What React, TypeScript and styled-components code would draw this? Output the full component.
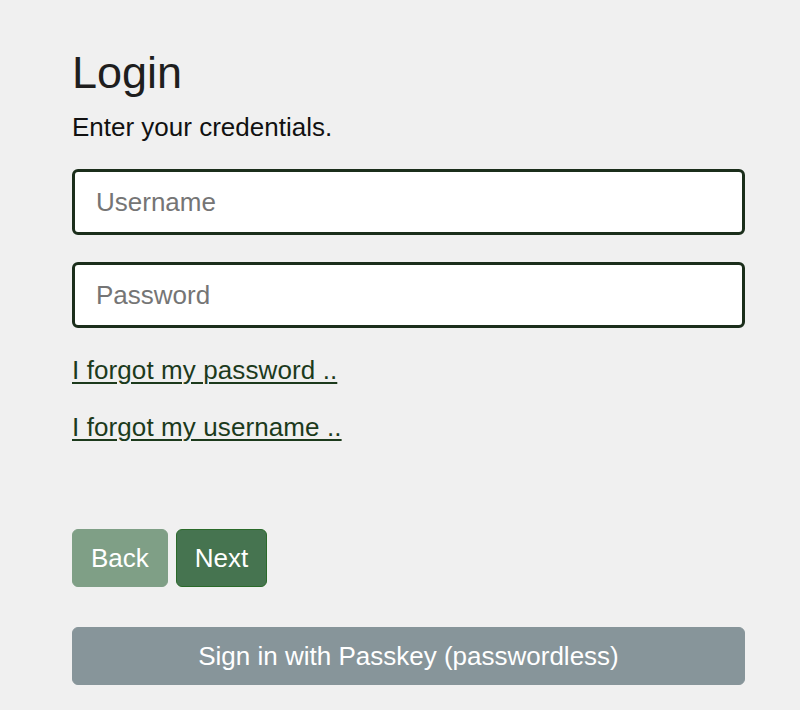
import React from "react";
import styled, { createGlobalStyle } from "styled-components";

const GlobalStyle = createGlobalStyle`
  html, body {
    margin: 0;
    padding: 0;
    background: #f0f0f0;
  }
  body {
    font-family: "Liberation Sans", Arial, sans-serif;
    color: #222;
  }
  * { box-sizing: border-box; }
`;

const Page = styled.main`
  width: 800px;
  min-height: 710px;
  padding: 47px 55px 0 72px;
  display: flex;
  flex-direction: column;
`;

const Title = styled.h1`
  margin: 0;
  font-size: 45px;
  line-height: 52px;
  font-weight: 400;
  color: #1e1e1e;
`;

const Subtitle = styled.p`
  margin: 13px 0 0;
  font-size: 26px;
  line-height: 30px;
  color: #111;
`;

const Form = styled.form`
  display: flex;
  flex-direction: column;
  margin-top: 27px;
  gap: 27px;
`;

const Field = styled.input`
  width: 673px;
  height: 66px;
  padding: 0 21px;
  border: 3px solid #1b2e1b;
  border-radius: 6px;
  background: #fff;
  font-family: "Liberation Sans", Arial, sans-serif;
  font-size: 26px;
  color: #222;
  outline: none;
  &::placeholder {
    color: #757575;
  }
`;

const Links = styled.div`
  display: flex;
  flex-direction: column;
  align-items: flex-start;
  gap: 27px;
  margin-top: 27px;
`;

const TextLink = styled.a`
  font-size: 26px;
  line-height: 30px;
  letter-spacing: 0.1px;
  color: #1c3a1c;
  text-decoration: underline;
  text-underline-offset: 3px;
  text-decoration-thickness: 2px;
`;

const ButtonRow = styled.div`
  display: flex;
  gap: 8px;
  margin-top: 87px;
`;

const Button = styled.button<{ $variant: "back" | "next" | "passkey" }>`
  height: 58px;
  padding: 0 18px;
  border-radius: 6px;
  font-family: "Liberation Sans", Arial, sans-serif;
  font-size: 26px;
  color: #fff;
  cursor: pointer;
  background: ${(p) =>
    p.$variant === "back" ? "#7f9f86" : p.$variant === "next" ? "#467450" : "#87959a"};
  border: 1px solid
    ${(p) =>
      p.$variant === "back" ? "#7f9f86" : p.$variant === "next" ? "#2a6a2a" : "#87959a"};
`;

const PasskeyButton = styled(Button)`
  width: 673px;
  margin-top: 40px;
`;

export default function App() {
  return (
    <>
      <GlobalStyle />
      <Page>
        <Title>Login</Title>
        <Subtitle>Enter your credentials.</Subtitle>
        <Form onSubmit={(e) => e.preventDefault()}>
          <Field type="text" placeholder="Username" />
          <Field type="password" placeholder="Password" />
        </Form>
        <Links>
          <TextLink href="#">I forgot my password ..</TextLink>
          <TextLink href="#">I forgot my username ..</TextLink>
        </Links>
        <ButtonRow>
          <Button $variant="back">Back</Button>
          <Button $variant="next">Next</Button>
        </ButtonRow>
        <PasskeyButton $variant="passkey">Sign in with Passkey (passwordless)</PasskeyButton>
      </Page>
    </>
  );
}
